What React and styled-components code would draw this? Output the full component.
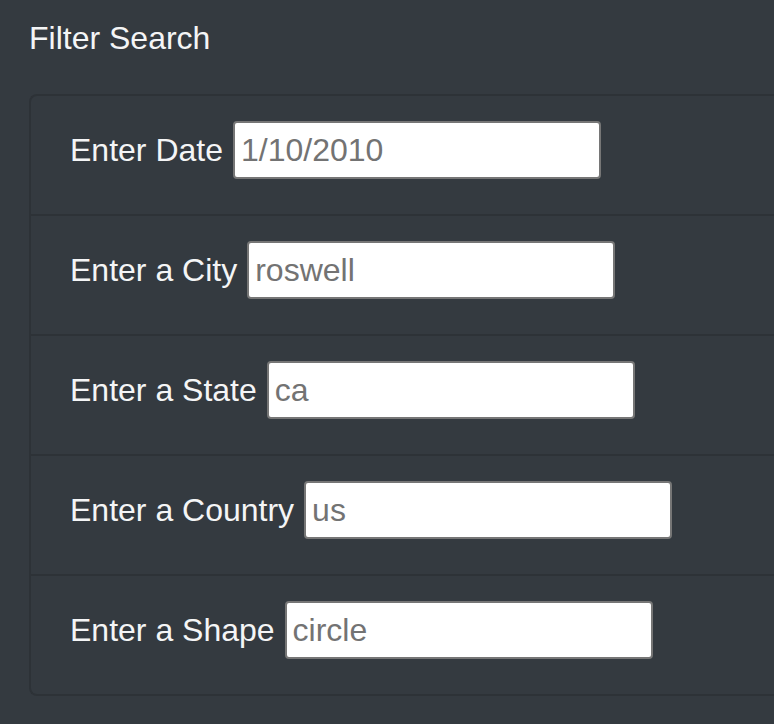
import React from "react";
import styled, { createGlobalStyle } from "styled-components";

const Global = createGlobalStyle`
  html, body {
    margin: 0;
    padding: 0;
    background: #343a40;
  }
  body {
    font-family: "Liberation Sans", Arial, sans-serif;
    color: #f8f9fa;
  }
`;

const Page = styled.div`
  padding: 20px 0 0 29px;
  min-height: 724px;
  box-sizing: border-box;
`;

const Title = styled.h2`
  margin: 0 0 37px 0;
  font-size: 32px;
  line-height: 37px;
  font-weight: 400;
  color: #f4f5f6;
`;

/* The list continues past the right edge of the window in the reference,
   so its right side is open (no right border / radius). */
const List = styled.ul`
  list-style: none;
  margin: 0;
  padding: 0;
  border: 2px solid #2d3237;
  border-right: none;
  border-radius: 8px 0 0 8px;
  background: #343a40;
`;

const Row = styled.li`
  display: flex;
  align-items: center;
  padding: 25px 39px 35px 39px;
  border-top: ${(p) => (p.$first ? "none" : "2px solid #2d3237")};
`;

const Label = styled.label`
  font-size: 32px;
  line-height: 37px;
  color: #f4f5f6;
  margin-right: 10px;
  white-space: nowrap;
`;

const Input = styled.input`
  box-sizing: border-box;
  width: 368px;
  height: 58px;
  padding: 0 6px;
  border: 2px solid #767676;
  border-radius: 4px;
  background: #ffffff;
  font-family: "Liberation Sans", Arial, sans-serif;
  font-size: 32px;
  color: #737373;
  outline: none;
`;

const fields = [
  { label: "Enter Date", value: "1/10/2010" },
  { label: "Enter a City", value: "roswell" },
  { label: "Enter a State", value: "ca" },
  { label: "Enter a Country", value: "us" },
  { label: "Enter a Shape", value: "circle" },
];

export default function App() {
  return (
    <>
      <Global />
      <Page>
        <Title>Filter Search</Title>
        <List>
          {fields.map((f, i) => (
            <Row key={f.label} $first={i === 0}>
              <Label>{f.label}</Label>
              <Input type="text" defaultValue={f.value} readOnly />
            </Row>
          ))}
        </List>
      </Page>
    </>
  );
}
